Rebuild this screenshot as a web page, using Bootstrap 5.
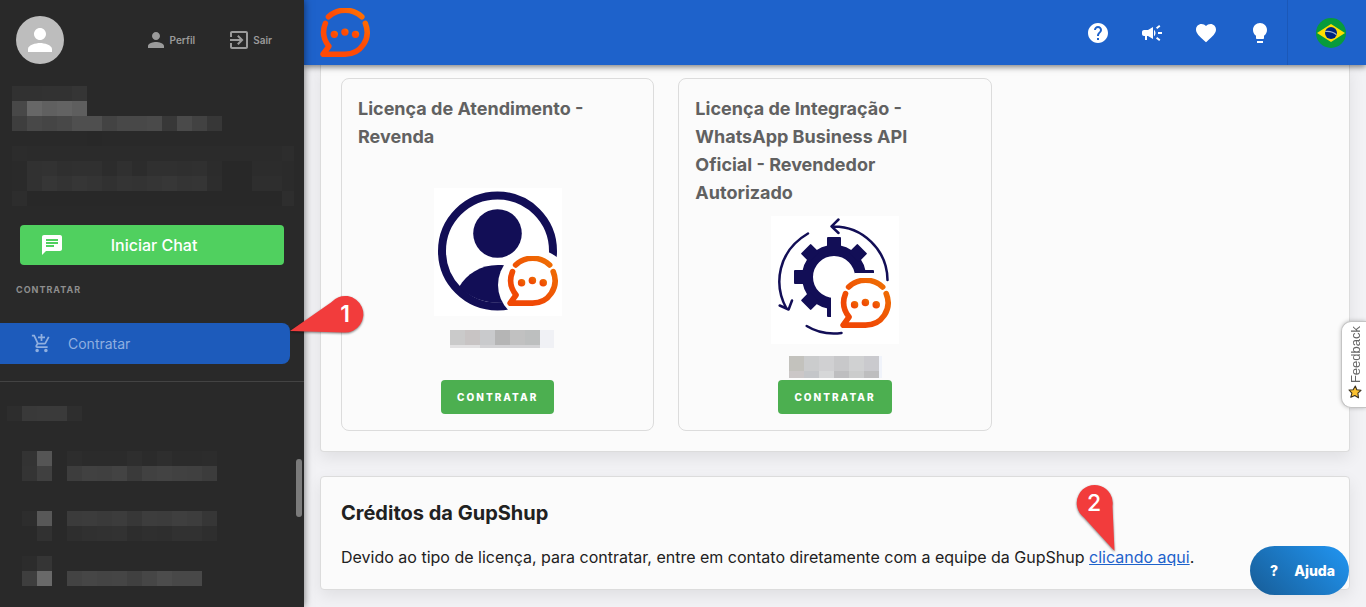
<!DOCTYPE html>
<html lang="pt-BR">
<head>
<meta charset="utf-8">
<meta name="viewport" content="width=device-width, initial-scale=1">
<title>Contratar</title>
<link href="https://cdn.jsdelivr.net/npm/bootstrap@5.3.0/dist/css/bootstrap.min.css" rel="stylesheet">
<style>
body{font-family:Inter,"Liberation Sans",sans-serif;background:#f2f2f5;color:#212121}
svg{display:block;flex-shrink:0}
.side{width:304px;background:#292929;color:#9a9a9a;z-index:5;box-shadow:0 0 8px rgba(0,0,0,.55)}
.avatar{width:48px;height:48px;background:#bdbdbd;color:#fff}
.side-link{color:#9a9a9a;font-size:10px;font-weight:600;gap:2px}
.chat-btn{height:40px;margin:19px 20px 0;background:#50d05f;color:#fff;border-radius:4px;padding:0 40px 0 20px;font-size:16px;font-weight:500;border:0}
.section-label{font-size:9px;line-height:16px;font-weight:700;letter-spacing:1px;color:#8e8e8e;margin:17px 16px 25px}
.nav-item-on{height:41px;width:290px;background:#1d5bbb;color:#8fafe0;border-radius:0 8px 8px 0;padding-left:31px;gap:16px;font-size:14px}
.rule{border-top:1px solid #434343;margin-top:17px}
.thumb{right:2px;top:459px;width:6px;height:58px;background:#7b7b7b}
.topbar{height:65px;background:#1e62cb;color:#fff;box-shadow:0 2px 6px rgba(0,0,0,.5);z-index:3;padding-left:16px}
.topbar a{color:#fff}
.lang{border-left:1px solid #1b58b8;padding:0 20px 0 28px}
.tools{gap:30px;padding-right:15px}
.panel{background:#fbfbfb;border:1px solid #dcdcdc;border-radius:4px;padding:20px;box-shadow:0 6px 16px rgba(0,0,0,.08)}
.panel-first{border-top:0;border-radius:0 0 4px 4px;padding-top:13px}
.offer{border:1px solid #dcdcdc;border-radius:8px;padding:16px;min-height:353px}
.offer h2{font-size:18px;line-height:28px;font-weight:700;color:#616161;margin:0}
.buy{height:34px;padding:0 16px;background:#4caf50;color:#fff;border:0;border-radius:4px;font-size:10px;font-weight:800;letter-spacing:2px}
.panel h1{font-size:20px;line-height:32px;font-weight:700;margin:0 0 16px}
.panel p{font-size:16px;line-height:24px;font-weight:400;margin:0}
.panel p a{color:#1e62cb}
.callout-pin{z-index:9;pointer-events:none}
.pin-one{right:-75px;top:-30px}
.pin-two{left:-15px;top:-64px}
.feedback{right:0;top:321px;height:87px;width:25px;background:#fff;border:1px solid #c4c4c4;border-right:0;border-radius:10px 0 0 10px;box-shadow:0 0 4px rgba(0,0,0,.25);z-index:4;color:#666;font:13px "Liberation Sans",sans-serif;padding:0 0 0 2px}
.feedback span{writing-mode:vertical-rl;transform:rotate(180deg)}
.help{right:17px;bottom:12px;height:49px;width:99px;border:0;color:#fff;background:linear-gradient(45deg,#175c96,#2196f3);font-size:14px;font-weight:800;z-index:4;gap:16px;padding:0 0 0 6px}
</style>
</head>
<body>
<svg width="0" height="0" class="position-absolute" aria-hidden="true">
  <defs>
    <linearGradient id="fire" x1="0" y1="1" x2="1" y2="0"><stop offset=".55" stop-color="#ff4a05"/><stop offset="1" stop-color="#ff7a00"/></linearGradient>
    <linearGradient id="ember" x1="0" y1="1" x2="1" y2="0"><stop offset=".3" stop-color="#f04905"/><stop offset="1" stop-color="#ee7203"/></linearGradient>
    <symbol id="bubble" viewBox="0 1 49 49">
      <path d="M8.3 9.6A24 24 0 0 1 41 9.6M5.3 16C2 24 3.5 32 8.7 38.5L3 46.3H24.5C40 46.3 50.5 31 44.4 16" fill="none" stroke-width="5.4" stroke-linecap="round" stroke-linejoin="round"/>
      <g stroke="none"><circle cx="14" cy="26.8" r="3.6"/><circle cx="24.4" cy="24.6" r="3.6"/><circle cx="34.8" cy="26.8" r="3.6"/></g>
    </symbol>
    <symbol id="person" viewBox="0 0 24 24"><path fill="currentColor" d="M12 12c2.21 0 4-1.79 4-4s-1.79-4-4-4-4 1.79-4 4 1.79 4 4 4zm0 2c-2.67 0-8 1.34-8 4v2h16v-2c0-2.66-5.33-4-8-4z"/></symbol>
  </defs>
</svg>
<div class="d-flex min-vh-100">
  <aside class="side position-relative flex-shrink-0 d-flex flex-column">
    <div class="d-flex align-items-center ps-3 pt-3">
      <div class="avatar rounded-circle d-flex align-items-center justify-content-center"><svg width="36" height="36"><use href="#person"/></svg></div>
      <a href="#" class="side-link d-flex align-items-center text-decoration-none ms-auto me-4"><svg width="24" height="24"><use href="#person"/></svg>Perfil</a>
      <a href="#" class="side-link d-flex align-items-center text-decoration-none ms-2 me-2 pe-4"><svg width="24" height="24" viewBox="0 0 24 24"><path fill="currentColor" d="M10.09 15.59L11.5 17l5-5-5-5-1.41 1.41L12.67 11H3v2h9.67l-2.58 2.59zM19 3H5c-1.11 0-2 .9-2 2v4h2V5h14v14H5v-4H3v4c0 1.1.89 2 2 2h14c1.1 0 2-.9 2-2V5c0-1.1-.9-2-2-2z"/></svg>Sair</a>
    </div>
    <svg class="mosaic" width="304" height="142" data-x="12" data-y="22" data-rows="31 31 32 32 35|48 67 60 63 5e|3e 48 45 48 4f 4f 43 48 48 4a 38 4a 42 37|. . . . . 28|2c 2b 2b 2b 2b 2b 2b 2b 2b 2b 2b 2b 2b 2b 2b 2b 2b 2b 2d|2a 31 32 2f 30 30 2c 30 2c 30 30 2f 30 2c 28 28 2c 2c 2b|2a 31 36 33 36 34 31 34 33 35 37 34 35 2d 28 28 2e 2e 2b|2d 28 28 28 28 28 28 28 28 28 28 28 28 28 28 28 28 28 2e"></svg>
    <button class="chat-btn d-flex align-items-center"><svg width="24" height="24" viewBox="0 0 24 24"><path fill="currentColor" d="M20 2H4c-1.1 0-1.99.9-1.99 2L2 22l4-4h14c1.1 0 2-.9 2-2V4c0-1.1-.9-2-2-2zM6 9h12v2H6V9zm8 5H6v-2h8v2zm4-6H6V6h12v2z"/></svg><span class="flex-grow-1 text-center">Iniciar Chat</span></button>
    <div class="section-label">CONTRATAR</div>
    <a href="#" class="nav-item-on position-relative d-flex align-items-center text-decoration-none">
      <svg width="21" height="21" viewBox="0 0 24 24"><path fill="currentColor" d="M11 9h2V6h3V4h-3V1h-2v3H8v2h3v3zm-4 9c-1.1 0-1.99.9-1.99 2S5.9 22 7 22s2-.9 2-2-.9-2-2-2zm10 0c-1.1 0-1.99.9-1.99 2s.89 2 1.99 2 2-.9 2-2-.9-2-2-2zm-9.83-3.25l.03-.12.9-1.63h7.45c.75 0 1.41-.41 1.75-1.03l3.86-7.01L19.42 4h-.01l-1.1 2-2.76 5H8.53l-.13-.27L6.16 6l-.95-2-.94-2H1v2h2l3.6 7.59-1.35 2.45c-.16.28-.25.61-.25.96 0 1.1.9 2 2 2h12v-2H7.42c-.13 0-.25-.11-.25-.25z"/></svg>
      Contratar
      <svg class="callout-pin pin-one position-absolute" width="76" height="44" viewBox="0 0 76 44"><path d="M1 38L42 9.500A18.300 18.300 0 1 1 55 39.500Z" fill="#f23c3c" filter="drop-shadow(0 1px 1px rgba(0,0,0,.5))"/><text x="56" y="29" text-anchor="middle" font-family="Inter,sans-serif" font-size="23" font-weight="600" fill="#fff">1</text></svg>
    </a>
    <div class="rule"></div>
    <svg class="mosaic" width="296" height="205" data-x="7" data-y="24" data-rows="2d 39 3a 3a 2e|||. 33 55 . 2d 2b 2b 2b 2e 2b 2e 2b 2b 2c|. 34 40 . 3d 41 40 43 3a 41 43 41 40 3c|||. 2d 58 . 3b 3c 3a 3c 37 3d 3c 3f 3d 36|. . 31 . 2e 30 31 32 2d 2f 2e 31 31 2e|| . 2c 35|. 3e 69 . 43 46 44 45 40 46 4c 48 48"></svg>
    <div class="thumb position-absolute rounded-pill"></div>
  </aside>

  <div class="flex-grow-1">
    <header class="topbar sticky-top d-flex align-items-center">
      <a href="#" aria-label="Início"><svg width="50" height="50" fill="url(#fire)" stroke="url(#fire)"><use href="#bubble"/></svg></a>
      <nav class="tools d-flex ms-auto">
        <a href="#" aria-label="Dúvidas"><svg width="24" height="24" viewBox="0 0 24 24"><path fill="currentColor" d="M12 2C6.480 2 2 6.480 2 12s4.480 10 10 10 10-4.480 10-10S17.520 2 12 2zm1 17h-2v-2h2v2zm2.070-7.750l-.9.920C13.450 12.900 13 13.500 13 15h-2v-.5c0-1.100.45-2.100 1.170-2.830l1.240-1.260c.37-.36.59-.86.59-1.410 0-1.100-.9-2-2-2s-2 .9-2 2H8c0-2.210 1.790-4 4-4s4 1.790 4 4c0 .88-.36 1.680-.93 2.250z"/></svg></a>
        <a href="#" aria-label="Novidades"><svg width="24" height="24" viewBox="0 0 24 24"><path fill="currentColor" d="M18 11v2h4v-2h-4zm-2 6.610c.96.71 2.210 1.650 3.200 2.390.4-.53.8-1.070 1.200-1.600-.99-.74-2.240-1.680-3.200-2.400-.4.54-.8 1.080-1.200 1.610zM20.400 5.600c-.4-.53-.8-1.070-1.200-1.600-.99.74-2.240 1.680-3.200 2.400.4.53.8 1.070 1.200 1.600.96-.72 2.210-1.650 3.200-2.400zM4 9c-1.100 0-2 .9-2 2v2c0 1.100.9 2 2 2h1v4h2v-4h1l5 3V6L8 9H4zm11.500 3c0-1.330-.58-2.530-1.500-3.350v6.690c.92-.81 1.500-2.010 1.500-3.340z"/></svg></a>
        <a href="#" aria-label="Favoritos"><svg width="24" height="24" viewBox="0 0 24 24"><path fill="currentColor" d="M12 21.350l-1.450-1.320C5.400 15.360 2 12.280 2 8.500 2 5.420 4.420 3 7.500 3c1.740 0 3.410.81 4.500 2.090C13.090 3.810 14.760 3 16.500 3 19.580 3 22 5.420 22 8.500c0 3.780-3.400 6.860-8.550 11.540L12 21.350z"/></svg></a>
        <a href="#" aria-label="Sugestões"><svg width="24" height="24" viewBox="0 0 24 24"><path fill="currentColor" d="M9 20h6v2H9zm3-18C8.140 2 5 5.140 5 9c0 2.380 1.190 4.470 3 5.740V17c0 .55.45 1 1 1h6c.55 0 1-.45 1-1v-2.260c1.810-1.270 3-3.360 3-5.740 0-3.860-3.140-7-7-7z"/></svg></a>
      </nav>
      <a href="#" class="lang h-100 d-flex align-items-center" aria-label="Português">
        <svg width="30" height="30" viewBox="0 0 30 30"><circle cx="15" cy="15" r="15" fill="#079b3c"/><path d="M1 15L15 6l14 9-14 9z" fill="#ffde00"/><circle cx="15" cy="15" r="6" fill="#00247d"/><path d="M9.200 13.500c4-.6 8 .3 11.300 3.300" stroke="#9db2cf" stroke-width="1.200" fill="none"/></svg>
      </a>
    </header>
    <main class="px-3">
      <section class="panel panel-first mb-4">
        <div class="row g-4">
          <div class="col-4">
            <article class="offer d-flex flex-column">
              <h2 class="pe-3">Licença de Atendimento - Revenda</h2>
              <div class="my-auto pt-2 d-flex flex-column align-items-center">
                <svg width="128" height="128" viewBox="0 0 128 128"><rect width="128" height="128" fill="#fff"/>
                  <circle cx="63.500" cy="63" r="55.500" fill="none" stroke="#120e56" stroke-width="8"/><circle cx="63.500" cy="45.500" r="24.300" fill="#120e56"/>
                  <path d="M25 99C33 86 46 77 64 77C84 77 95 86 103 99A56 56 0 0 1 25 99Z" fill="#120e56"/><circle cx="100" cy="97" r="36" fill="#fff"/><rect x="124" y="70" width="4" height="58" fill="#fff"/>
                  <use href="#bubble" x="73" y="68" width="51" height="51" fill="url(#ember)" stroke="url(#ember)"/></svg>
                <svg width="112" height="36" shape-rendering="crispEdges"><path d="M8 14h15v15h-15z" fill="#cacaca"/><path d="M23 14h15v15h-15z" fill="#c8c4c4"/><path d="M38 14h15v15h-15z" fill="#c9cacc"/><path d="M53 14h15v15h-15z" fill="#b5b5b5"/><path d="M68 14h15v15h-15z" fill="#c1c1c1"/><path d="M83 14h15v15h-15z" fill="#bdbfbf"/><path d="M98 14h14v18h-14z" fill="#f0f1f5"/><path d="M8 29h30v3h-30z" fill="#e2e1e2"/><path d="M38 29h60v3h-60z" fill="#d3d3d5"/></svg>
              </div>
              <button class="buy align-self-center">CONTRATAR</button>
            </article>
          </div>
          <div class="col-4">
            <article class="offer d-flex flex-column">
              <h2 class="pe-3">Licença de Integração - WhatsApp Business API Oficial - Revendedor Autorizado</h2>
              <div class="my-auto pt-2 d-flex flex-column align-items-center">
                <svg width="128" height="128" viewBox="0 0 128 128"><rect width="128" height="128" fill="#fff"/>
                  <g transform="translate(63 61)"><circle r="26.500" fill="none" stroke="#120e56" stroke-width="11"/>
                    <g fill="#120e56"><rect id="tooth" x="-7" y="-40" width="14" height="12" rx="1"/><use href="#tooth" transform="rotate(45)"/><use href="#tooth" transform="rotate(90)"/><use href="#tooth" transform="rotate(180)"/><use href="#tooth" transform="rotate(225)"/><use href="#tooth" transform="rotate(270)"/><use href="#tooth" transform="rotate(315)"/></g></g>
                  <path d="M60 90V70L84 57H128V128H60Z" fill="#fff"/>
                  <g fill="none" stroke="#120e56" stroke-width="2.500" stroke-linecap="round" stroke-linejoin="round"><path d="M61 10.500A54 54 0 0 1 116.500 64M67.500 3.500L60.500 10.300L67.500 17M37 17.500C7 35 2 68 15.500 92.500M8.700 89.500L17.600 93.500L21 84.500M35.700 110Q51 119.500 70.500 117"/></g>
                  <use href="#bubble" x="69" y="62" width="51" height="51" fill="url(#ember)" stroke="url(#ember)"/></svg>
                <svg width="112" height="36" shape-rendering="crispEdges"><path d="M10 12h15v15h-15z" fill="#c3c2bd"/><path d="M25 12h15v15h-15z" fill="#cbcccd"/><path d="M40 12h15v15h-15z" fill="#d0d0d2"/><path d="M55 12h15v15h-15z" fill="#c8c8ca"/><path d="M70 12h15v15h-15z" fill="#d0d1d2"/><path d="M85 12h15v15h-15z" fill="#cacace"/><path d="M10 27h15v7h-15z" fill="#cbc7c7"/><path d="M25 27h15v7h-15z" fill="#c4c6c9"/><path d="M40 27h15v7h-15z" fill="#d6d7d8"/><path d="M55 27h15v7h-15z" fill="#bebec0"/><path d="M70 27h15v7h-15z" fill="#cbcccc"/><path d="M85 27h15v7h-15z" fill="#bebebf"/><path d="M100 12h3v22h-3z" fill="#f0f3fa"/></svg>
              </div>
              <button class="buy align-self-center">CONTRATAR</button>
            </article>
          </div>
        </div>
      </section>
      <section class="panel">
        <h1>Créditos da GupShup</h1>
        <p>Devido ao tipo de licença, para contratar, entre em contato diretamente com a equipe da GupShup <span class="position-relative"><a href="#">clicando aqui</a><svg class="callout-pin pin-two position-absolute" width="44" height="72" viewBox="0 0 44 72"><path d="M40.500 68L10 34.500A18 18 0 1 1 38.500 23Z" fill="#f23c3c" filter="drop-shadow(0 1px 1px rgba(0,0,0,.5))"/><text x="20" y="28" text-anchor="middle" font-family="Inter,sans-serif" font-size="23" font-weight="500" fill="#fff">2</text></svg></span>.</p>
      </section>
    </main>
  </div>
</div>
<button class="feedback position-fixed d-flex flex-column align-items-center justify-content-between py-1"><span>Feedback</span>
  <svg width="14" height="14" viewBox="0 0 14 14" class="mb-1"><path d="M7.300 1L8.800 4.800 13 5.300 9.900 8.200 10.500 12.800 6.800 10.500 2.800 12.300 3.900 8.200 1 5 5.200 4.700z" fill="#fcc231" stroke="#3a3020" stroke-width="1.100" stroke-linejoin="round"/></svg></button>
<button class="help position-fixed rounded-pill d-flex align-items-center justify-content-center"><span>?</span><span>Ajuda</span></button>
<script src="https://cdn.jsdelivr.net/npm/bootstrap@5.3.0/dist/js/bootstrap.bundle.min.js"></script>
<script>
// Redacted blocks: each row lists the grey level of its 15px cells, "." leaves a gap.
document.querySelectorAll('.mosaic').forEach(function (svg) {
  var x0 = +svg.dataset.x, y0 = +svg.dataset.y, out = '';
  svg.dataset.rows.split('|').forEach(function (row, r) {
    row.trim().split(' ').forEach(function (g, c) {
      if (g && g !== '.') out += '<rect x="' + (x0 + c * 15) + '" y="' + (y0 + r * 15) + '" width="' + (c === 18 ? 12 : 15) + '" height="15" fill="#' + g + g + g + '"/>';
    });
  });
  svg.innerHTML = out;
});
</script>
</body>
</html>
